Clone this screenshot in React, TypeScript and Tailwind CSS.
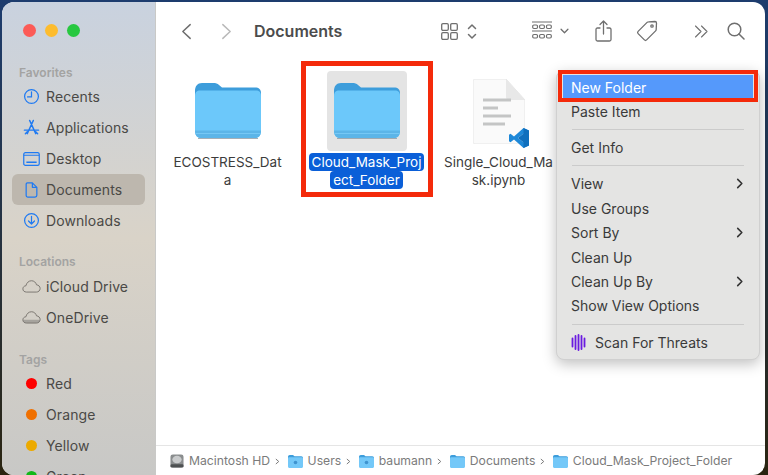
import React from "react";

const FONT = "font-['Inter','Liberation_Sans',sans-serif]";

const Folder = ({ className }: { className?: string }) => (
  <svg viewBox="0 0 66 56" className={className}>
    <path d="M0 8C0 3 2.500 0 7 0H18C21 0 22.500 0.500 24 2L27 4.500H60C64 4.500 66 6.500 66 10V30H0Z" fill="#3d9ddb" />
    <path d="M0 13C0 9 2 7.500 5 7.500H61C64 7.500 66 9 66 13V48C66 52.500 63.500 55 60 55H6C2.500 55 0 52.500 0 48Z" fill="#6cc8fa" />
    <path d="M0 47.500H66V48C66 52.500 63.500 55 60 55H6C2.500 55 0 52.500 0 48Z" fill="#5cb5e8" />
    <path d="M0.500 50.500H65.500" stroke="#7ccdf8" strokeWidth="0.8" />
    <path d="M3 55.500H63" stroke="#8f9aa3" strokeWidth="0.8" />
  </svg>
);

const SmallFolder = ({ dot }: { dot?: boolean }) => (
  <svg viewBox="0 0 15 13" className="w-[15px] h-[13px] shrink-0">
    <path d="M0 2C0 .8.700 0 1.800 0H5L6.500 1.300H13.300C14.400 1.300 15 2 15 3V6H0Z" fill="#3d9ddb" />
    <path d="M0 3.500C0 2.700.600 2.300 1.300 2.300H13.700C14.400 2.300 15 2.700 15 3.500V11.500C15 12.400 14.400 13 13.500 13H1.500C.600 13 0 12.400 0 11.500Z" fill="#74c8f8" />
    {dot && <circle cx="7.500" cy="7.500" r="1.800" fill="#3f93cf" />}
  </svg>
);

const Recents = () => (
  <svg viewBox="0 0 18 18" className="w-[17px] h-[17px]" fill="none" stroke="#1f7af2" strokeWidth="1.300">
    <circle cx="9" cy="9" r="7.300" />
    <path d="M9 4V9.500H4.800" strokeLinecap="round" />
  </svg>
);

const Applications = () => (
  <svg viewBox="0 0 18 18" className="w-[17px] h-[17px]" fill="none" stroke="#1f7af2" strokeWidth="1.500" strokeLinecap="round">
    <path d="M7 1.500L13.500 15.500M11 1.500L4.500 15.500M1.500 11.800H16.500M2.500 15.500L4.500 13.500M15.500 15.500L13.500 13.500" />
  </svg>
);

const Desktop = () => (
  <svg viewBox="0 0 18 15" className="w-[17px] h-[14px]" fill="none" stroke="#1f7af2" strokeWidth="1.300">
    <rect x="0.700" y="0.700" width="16.600" height="13.600" rx="1.800" />
    <path d="M0.700 3.500H17.300" />
    <path d="M3.500 11H14.500" strokeWidth="1.800" />
  </svg>
);

const Documents = () => (
  <svg viewBox="0 0 14 18" className="w-[13px] h-[16px]" fill="none" stroke="#1f7af2" strokeWidth="1.400" strokeLinejoin="round">
    <path d="M2.500 1H8L13 6V15C13 16.200 12.200 17 11 17H3C1.800 17 1 16.200 1 15V2.500C1 1.600 1.600 1 2.500 1Z" />
    <path d="M8 1V6H13" />
  </svg>
);

const Downloads = () => (
  <svg viewBox="0 0 18 18" className="w-[17px] h-[17px]" fill="none" stroke="#1f7af2" strokeWidth="1.300" strokeLinecap="round" strokeLinejoin="round">
    <circle cx="9" cy="9" r="7.300" />
    <path d="M9 4.500V12.500M5.800 9.500L9 12.700L12.200 9.500" />
  </svg>
);

const CloudIcon = ({ filled }: { filled?: boolean }) => (
  <svg viewBox="0 0 20 14" className="w-[19px] h-[13px]" fill="none" stroke="#77736d" strokeWidth="1">
    {filled && <path d="M1 9.500H19C19 12 17.500 13 15.500 13H4.500C2.500 13 1 12 1 9.500Z" fill="#a6a39d" stroke="none" />}
    <path d="M4.500 13C2.300 13 .700 11.500.700 9.600C.700 7.700 2.100 6.300 4 6.200C4.600 3 7.100 .800 10 .800C12.700 .800 14.800 2.700 15.400 5.200C17.600 5.400 19.300 7 19.300 9.100C19.300 11.400 17.500 13 15.300 13Z" />
  </svg>
);

const Dot = ({ color }: { color: string }) => (
  <span className={`w-[11px] h-[11px] rounded-full ${color}`} />
);

const SideItem = ({ icon, label, active }: { icon: React.ReactNode; label: string; active?: boolean }) => (
  <div className={`h-[31px] shrink-0 mx-[10px] px-[10px] flex items-center rounded-md ${active ? "bg-[#bdb7ae]" : ""}`}>
    <span className="w-[24px] -ml-[3px] mr-[3px] flex items-center justify-center shrink-0">{icon}</span>
    <span className="text-[14px] text-[#4a4946] tracking-[0.1px] whitespace-nowrap">{label}</span>
  </div>
);

const SideHead = ({ label, className }: { label: string; className?: string }) => (
  <div className={`shrink-0 pl-[17px] text-[12px] font-semibold text-[#a3a3a2] ${className}`}>{label}</div>
);

const Sidebar = () => (
  <aside className="w-[154px] shrink-0 overflow-hidden bg-gradient-to-b from-[#c9d2df] via-[#d9d3c8] to-[#c8c8c6] border-r border-[#c9c9c7] flex flex-col">
    <div className="flex shrink-0 gap-[9px] pl-[21px] pt-[22px]">
      <span className="w-[13px] h-[13px] rounded-full bg-[#fc5b57]" />
      <span className="w-[13px] h-[13px] rounded-full bg-[#fdbc2e]" />
      <span className="w-[13px] h-[13px] rounded-full bg-[#27c840]" />
    </div>
    <SideHead label="Favorites" className="mt-[28px] h-[16px] leading-[16px]" />
    <SideItem icon={<Recents />} label="Recents" />
    <SideItem icon={<Applications />} label="Applications" />
    <SideItem icon={<Desktop />} label="Desktop" />
    <SideItem icon={<Documents />} label="Documents" active />
    <SideItem icon={<Downloads />} label="Downloads" />
    <SideHead label="Locations" className="mt-[18px] h-[16px] leading-[16px] mb-[1px]" />
    <SideItem icon={<CloudIcon />} label="iCloud Drive" />
    <SideItem icon={<CloudIcon filled />} label="OneDrive" />
    <SideHead label="Tags" className="mt-[19px] h-[16px] leading-[16px]" />
    <SideItem icon={<Dot color="bg-[#fe0000]" />} label="Red" />
    <SideItem icon={<Dot color="bg-[#f07000]" />} label="Orange" />
    <SideItem icon={<Dot color="bg-[#ecaa00]" />} label="Yellow" />
    <SideItem icon={<Dot color="bg-[#12b818]" />} label="Green" />
  </aside>
);

const stroke = { fill: "none", stroke: "#6f6f6f", strokeWidth: 1.300, strokeLinecap: "round", strokeLinejoin: "round" } as const;

const Toolbar = () => (
  <div className="h-[58px] shrink-0 flex items-center">
    <svg viewBox="0 0 12 18" className="w-[11px] h-[17px] ml-[25px]" {...stroke} strokeWidth={1.600}>
      <path d="M10 1.500L2 9L10 16.500" />
    </svg>
    <svg viewBox="0 0 12 18" className="w-[11px] h-[17px] ml-[29px]" {...stroke} stroke="#b9b9b9" strokeWidth={1.600}>
      <path d="M2 1.500L10 9L2 16.500" />
    </svg>
    <span className="ml-[22px] text-[16px] font-semibold text-[#4c4c4c] w-[187px]">Documents</span>
    <svg viewBox="0 0 17 17" className="w-[17px] h-[17px]" {...stroke}>
      <rect x="0.700" y="0.700" width="6.600" height="6.600" rx="1.200" />
      <rect x="9.700" y="0.700" width="6.600" height="6.600" rx="1.200" />
      <rect x="0.700" y="9.700" width="6.600" height="6.600" rx="1.200" />
      <rect x="9.700" y="9.700" width="6.600" height="6.600" rx="1.200" />
    </svg>
    <svg viewBox="0 0 10 17" className="w-[10px] h-[17px] ml-[9px]" {...stroke} strokeWidth={1.500}>
      <path d="M1.500 5.500L5 2L8.500 5.500M1.500 11.500L5 15L8.500 11.500" />
    </svg>
    <svg viewBox="0 0 20 20" className="w-[20px] h-[20px] ml-[55px]" {...stroke} strokeWidth={1.200}>
      <path d="M0.500 1H19.500M0.500 10H19.500" />
      <rect x="0.700" y="4" width="4.800" height="3.500" rx="1.200" />
      <rect x="7.600" y="4" width="4.800" height="3.500" rx="1.200" />
      <rect x="14.500" y="4" width="4.800" height="3.500" rx="1.200" />
      <rect x="0.700" y="13.500" width="4.800" height="3.500" rx="1.200" />
      <rect x="7.600" y="13.500" width="4.800" height="3.500" rx="1.200" />
      <rect x="14.500" y="13.500" width="4.800" height="3.500" rx="1.200" />
    </svg>
    <svg viewBox="0 0 10 7" className="w-[9px] h-[6px] ml-[8px]" {...stroke} strokeWidth={1.500}>
      <path d="M1 1.500L5 5.500L9 1.500" />
    </svg>
    <svg viewBox="0 0 17 22" className="w-[17px] h-[22px] ml-[26px]" {...stroke}>
      <path d="M5 8H2.500C1.500 8 1 8.500 1 9.500V19.500C1 20.500 1.500 21 2.500 21H14.500C15.500 21 16 20.500 16 19.500V9.500C16 8.500 15.500 8 14.500 8H12" />
      <path d="M8.500 14V1.500M5 4.500L8.500 1L12 4.500" />
    </svg>
    <svg viewBox="0 0 22 22" className="w-[22px] h-[22px] ml-[24px]" {...stroke}>
      <path d="M12.500 1.800L19 1.500C19.800 1.500 20.500 2.200 20.500 3L20.200 9.500C20.200 10 20 10.500 19.600 10.900L10.600 19.900C10 20.500 9 20.500 8.400 19.900L2.100 13.600C1.500 13 1.500 12 2.100 11.400L11.100 2.400C11.500 2 12 1.800 12.500 1.800Z" />
      <circle cx="16" cy="6" r="1.200" />
    </svg>
    <svg viewBox="0 0 15 13" className="w-[15px] h-[13px] ml-[36px]" {...stroke} strokeWidth={1.100}>
      <path d="M1.500 1L7 6.500L1.500 12M7.500 1L13 6.500L7.500 12" />
    </svg>
    <svg viewBox="0 0 18 18" className="w-[18px] h-[18px] ml-[18px]" {...stroke} strokeWidth={1.500}>
      <circle cx="7.500" cy="7.500" r="6.300" />
      <path d="M12 12L17 17" />
    </svg>
  </div>
);

const VsCode = () => (
  <svg viewBox="0 0 20 20" className="absolute -right-[4px] bottom-[-4px] w-[20px] h-[20px]">
    <path d="M14.500 0L20 2.500V17.500L14.500 20L5 11.500L1.500 14.300L0 13.300V6.700L1.500 5.700L5 8.500Z M14.500 5.500L9 10L14.500 14.500Z" fill="#1e88d8" fillRule="evenodd" />
    <path d="M14.500 0L20 2.500V17.500L14.500 20Z M14.500 5.500V14.500L9 10Z" fill="#0f6fbd" fillRule="evenodd" />
  </svg>
);

const Notebook = () => (
  <div className="relative w-[52px] h-[65px]">
    <svg viewBox="0 0 52 65" className="w-[52px] h-[65px]">
      <path d="M2 0H33L52 21V63C52 64 51 65 50 65H2C1 65 0 64 0 63V2C0 1 1 0 2 0Z" fill="#fafafa" stroke="#e6e6e6" strokeWidth="1" />
      <path d="M33 0V18C33 20 34 21 36 21H52Z" fill="#e8e8e8" />
      <path d="M10 21H38M10 29H25M10 37H38M10 45H32" stroke="#c4c5c5" strokeWidth="3.200" />
    </svg>
    <VsCode />
  </div>
);

const FileItem = ({ icon, lines, selected, className }: { icon: React.ReactNode; lines: string[]; selected?: boolean; className?: string }) => (
  <div className={`w-[139px] shrink-0 flex flex-col items-center ${className}`}>
    <div className={`w-[80px] h-[80px] rounded-[4px] flex items-center justify-center ${selected ? "bg-[#e4e4e4]" : ""}`}>{icon}</div>
    <div className="mt-[2px] flex flex-col items-center text-[13.500px] leading-[18px] whitespace-nowrap">
      {lines.map((l) => (
        <span key={l} className={selected ? "bg-[#0a5fd8] text-white rounded-[4px] px-[3px]" : "text-[#3c3c3c]"}>{l}</span>
      ))}
    </div>
  </div>
);

const Crumb = ({ icon, label, last }: { icon: React.ReactNode; label: string; last?: boolean }) => (
  <>
    {icon}
    <span className="ml-[5px] text-[12.200px] text-[#7b7b7b] whitespace-nowrap">{label}</span>
    {!last && (
      <svg viewBox="0 0 6 8" className="w-[5px] h-[7px] ml-[5px] mr-[7.500px] shrink-0" fill="none" stroke="#7b7b7b" strokeWidth="1.200">
        <path d="M1 1L4.500 4L1 7" />
      </svg>
    )}
  </>
);

const Disk = () => (
  <svg viewBox="0 0 15 15" className="w-[14px] h-[14px] shrink-0">
    <rect x="0.500" y="0.500" width="14" height="14" rx="2.500" fill="#8a8d8e" />
    <ellipse cx="7.500" cy="6" rx="5" ry="4" fill="#c9cbcc" />
    <rect x="0.500" y="11" width="14" height="3.500" rx="1.500" fill="#4e5152" />
  </svg>
);

const Row = ({ label, arrow, className, icon }: { label: string; arrow?: boolean; className?: string; icon?: React.ReactNode }) => (
  <div className={`h-[24.400px] shrink-0 flex items-center justify-between pl-[14px] pr-[15px] text-[14px] text-[#3a3a3a] ${className}`}>
    <span className="flex items-center">{icon}{label}</span>
    {arrow && (
      <svg viewBox="0 0 8 12" className="w-[8px] h-[11px]" fill="none" stroke="#333333" strokeWidth="1.700" strokeLinecap="round" strokeLinejoin="round">
        <path d="M1.500 1.500L6 6L1.500 10.500" />
      </svg>
    )}
  </div>
);

const Sep = () => <div className="h-px bg-[#cbcbcb] mx-[15px] my-[5.500px]" />;

const ThreatIcon = () => (
  <svg viewBox="0 0 15 17" className="w-[15px] h-[17px] mr-[9px]" fill="none" stroke="#6a1be0" strokeWidth="1.800" strokeLinecap="round">
    <path d="M1.500 4.500V12.500M4.500 2V15M7.500 1V16M10.500 2V15M13.500 4.500V12.500" />
  </svg>
);

const ContextMenu = () => (
  <div className="absolute left-[556px] top-[70px] w-[204px] h-[290px] rounded-[8px] bg-[#e4e4e3] border border-[#d0d0d0] shadow-[0_4px_14px_rgba(0,0,0,0.25)] pt-[4px] flex flex-col">
    <div className="relative h-[24.400px] shrink-0 mx-[6px] bg-[#5599fb] flex items-center pl-[8px] text-[14px] text-white">
      New Folder
      <div className="absolute -inset-x-[5px] -top-[5px] -bottom-[3px] border-[4px] border-[#f42a0a]" />
    </div>
    <Row label="Paste Item" />
    <Sep />
    <Row label="Get Info" className="-mt-[0.500px]" />
    <Sep />
    <Row label="View" arrow />
    <Row label="Use Groups" />
    <Row label="Sort By" arrow />
    <Row label="Clean Up" />
    <Row label="Clean Up By" arrow />
    <Row label="Show View Options" />
    <Sep />
    <Row label="Scan For Threats" icon={<ThreatIcon />} />
  </div>
);

export default function App() {
  return (
    <div className={`relative w-[768px] h-[475px] overflow-hidden bg-gradient-to-b from-[#1d3c6e] to-[#2a2410] pt-[2px] pl-[2px] pr-[3px] ${FONT}`}>
      <div className="h-[473px] flex rounded-[12px] overflow-hidden bg-white">
        <Sidebar />
        <main className="flex-1 min-w-0 flex flex-col">
          <Toolbar />
          <div className="flex-1 flex items-start pt-[11px] pl-[2px]">
            <FileItem icon={<Folder className="w-[66px] h-[56px]" />} lines={["ECOSTRESS_Dat", "a"]} />
            <FileItem icon={<Folder className="w-[66px] h-[56px]" />} lines={["Cloud_Mask_Proj", "ect_Folder"]} selected />
            <FileItem icon={<Notebook />} lines={["Single_Cloud_Ma", "sk.ipynb"]} className="-ml-[7px]" />
          </div>
          <div className="h-[30px] shrink-0 border-t border-[#e5e5e5] flex items-center pl-[14px] pt-[1px]">
            <Crumb icon={<Disk />} label="Macintosh HD" />
            <Crumb icon={<SmallFolder dot />} label="Users" />
            <Crumb icon={<SmallFolder dot />} label="baumann" />
            <Crumb icon={<SmallFolder />} label="Documents" />
            <Crumb icon={<SmallFolder />} label="Cloud_Mask_Project_Folder" last />
          </div>
        </main>
      </div>
      <div className="absolute left-[301px] top-[61px] w-[132px] h-[136px] border-[5px] border-[#f42a0a]" />
      <ContextMenu />
    </div>
  );
}
